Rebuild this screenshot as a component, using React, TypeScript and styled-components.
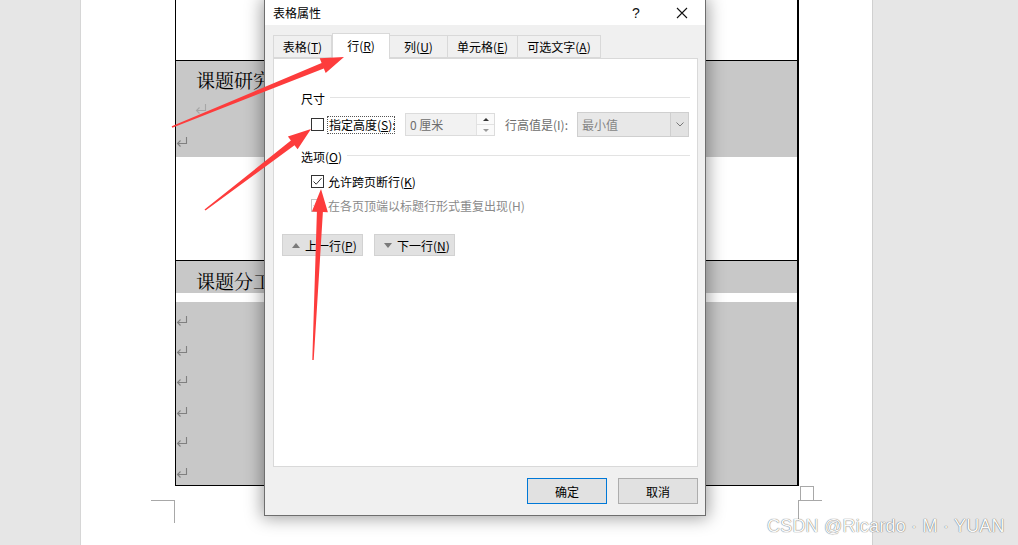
import React from "react";
import styled, { createGlobalStyle } from "styled-components";

const GlobalStyle = createGlobalStyle`
  html, body { margin: 0; padding: 0; }
  body {
    background: #e6e6e6;
    overflow: hidden;
    font-family: "Noto Sans CJK SC", "Noto Sans", sans-serif;
  }
`;

const UI_FONT = `"Noto Sans CJK SC", "Noto Sans", sans-serif`;
const DOC_FONT = `"Noto Serif CJK SC", "Noto Sans CJK SC", serif`;

const Screen = styled.div`
  position: relative;
  width: 1018px;
  height: 545px;
  overflow: hidden;
  display: flex;
  background: #e6e6e6;
`;

const Gutter = styled.div<{ $w: number }>`
  width: ${(p) => p.$w}px;
  flex: none;
`;

const Page = styled.div`
  width: 793px;
  flex: none;
  box-sizing: border-box;
  background: #fff;
  border-left: 1px solid #d6d6d6;
  border-right: 1px solid #d0d0d0;
  padding-left: 94px;
`;

const Table = styled.div`
  width: 624px;
  box-sizing: border-box;
  border-left: 1px solid #000;
  border-right: 2px solid #000;
  border-bottom: 1px solid #000;
`;

const Row = styled.div<{ $h: number; $gray?: boolean; $line?: boolean }>`
  height: ${(p) => p.$h}px;
  box-sizing: border-box;
  background: ${(p) => (p.$gray ? "#c8c8c8" : "#ffffff")};
  border-bottom: ${(p) => (p.$line ? "1px solid #000" : "none")};
  display: flex;
  flex-direction: column;
`;

const CellTitle = styled.div<{ $top: number }>`
  font-family: ${DOC_FONT};
  font-size: 19px;
  font-weight: 400;
  line-height: 26px;
  color: #000;
  padding-left: 20px;
  margin-top: ${(p) => p.$top}px;
  white-space: nowrap;
`;

const Marks = styled.div<{ $top: number }>`
  display: flex;
  flex-direction: column;
  padding-top: ${(p) => p.$top}px;
`;

const ReturnMark = styled.div<{ $indent?: number; $h?: number }>`
  height: ${(p) => p.$h ?? 30.4}px;
  flex: none;
  display: flex;
  align-items: center;
  padding-left: ${(p) => p.$indent ?? 0}px;
  & > svg {
    flex: none;
    display: block;
  }
`;

const CropRow = styled.div`
  width: 671px;
  margin-left: -24px;
  margin-top: 14px;
  display: flex;
  justify-content: space-between;
`;

const CropLeft = styled.div`
  width: 24px;
  height: 23px;
  box-sizing: border-box;
  border-top: 1px solid #a8a8a8;
  border-right: 1px solid #a8a8a8;
`;

const CropRight = styled.div`
  position: relative;
  width: 24px;
  height: 21px;
  box-sizing: border-box;
  border-top: 1px solid #a8a8a8;
  border-left: 1px solid #a8a8a8;
  &::before {
    content: "";
    position: absolute;
    left: 1px;
    top: -15px;
    width: 14px;
    height: 14px;
    box-sizing: border-box;
    border: 1px solid #a8a8a8;
    border-bottom: none;
  }
`;

/* ---------------- dialog ---------------- */

const Dialog = styled.div`
  position: absolute;
  left: 264px;
  top: 0;
  width: 442px;
  height: 516px;
  box-sizing: border-box;
  border: 1px solid #6e6e6e;
  border-top: none;
  background: #f0f0f0;
  box-shadow: 0 0 16px 2px rgba(0, 0, 0, 0.38);
  display: flex;
  flex-direction: column;
  font-family: ${UI_FONT};
  font-size: 12px;
  color: #000;
`;

const TitleBar = styled.div`
  height: 25px;
  flex: none;
  background: #ffffff;
  display: flex;
  align-items: center;
  padding-left: 8px;
`;

const TitleText = styled.div`
  flex: 1;
  font-size: 12px;
  line-height: 16px;
`;

const TitleButton = styled.div<{ $w: number }>`
  width: ${(p) => p.$w}px;
  height: 25px;
  display: flex;
  align-items: center;
  justify-content: center;
  font-family: "Liberation Sans", sans-serif;
  font-size: 14px;
  color: #111;
`;

const Body = styled.div`
  flex: 1;
  display: flex;
  flex-direction: column;
  padding: 8px 7px 11px 8px;
`;

const TabBar = styled.div`
  display: flex;
  align-items: flex-end;
  height: 25px;
  position: relative;
  z-index: 1;
`;

const Tab = styled.div<{ $w: number; $active?: boolean }>`
  width: ${(p) => p.$w}px;
  height: ${(p) => (p.$active ? 26 : 23)}px;
  box-sizing: border-box;
  margin-bottom: ${(p) => (p.$active ? -1 : 0)}px;
  background: ${(p) => (p.$active ? "#ffffff" : "#f0f0f0")};
  border: 1px solid #d9d9d9;
  border-bottom: ${(p) => (p.$active ? "none" : "1px solid #d9d9d9")};
  border-left: ${(p) => (p.$active ? "1px solid #d9d9d9" : "none")};
  &:first-child {
    border-left: 1px solid #d9d9d9;
  }
  display: flex;
  align-items: center;
  justify-content: center;
  padding-bottom: ${(p) => (p.$active ? 2 : 0)}px;
  font-size: 12px;
  white-space: nowrap;
`;

const Panel = styled.div`
  height: 409px;
  box-sizing: border-box;
  background: #fff;
  border: 1px solid #d9d9d9;
  display: flex;
  flex-direction: column;
  padding-top: 31px;
`;

const SectionHead = styled.div<{ $top: number }>`
  display: flex;
  align-items: center;
  height: 16px;
  margin-top: ${(p) => p.$top}px;
  padding: 0 7px 0 27px;
  font-size: 12px;
  white-space: nowrap;
  &::after {
    content: "";
    flex: 1;
    height: 1px;
    background: #e3e3e3;
    margin-left: 5px;
    margin-top: -2px;
  }
`;

const FieldRow = styled.div<{ $top: number; $h: number }>`
  display: flex;
  align-items: center;
  height: ${(p) => p.$h}px;
  margin-top: ${(p) => p.$top}px;
  padding-left: 37px;
  white-space: nowrap;
`;

const Box = styled.div<{ $disabled?: boolean }>`
  width: 13px;
  height: 13px;
  flex: none;
  box-sizing: border-box;
  border: 1px solid ${(p) => (p.$disabled ? "#c4c4c4" : "#333333")};
  background: #fff;
  display: flex;
  align-items: center;
  justify-content: center;
`;

const FocusLabel = styled.div`
  width: 68px;
  height: 18px;
  box-sizing: border-box;
  margin-left: 3px;
  border: 1px dotted #555;
  display: flex;
  align-items: center;
  padding-left: 1px;
  font-size: 12px;
`;

const CheckLabel = styled.div<{ $disabled?: boolean }>`
  margin-left: 4px;
  font-size: 12px;
  color: ${(p) => (p.$disabled ? "#8a8a8a" : "#000")};
`;

const NumInput = styled.div`
  width: 90px;
  height: 23px;
  box-sizing: border-box;
  margin-left: 10px;
  border: 1px solid #dcdcdc;
  background: #f2f2f2;
  display: flex;
`;

const InputText = styled.div`
  flex: 1;
  display: flex;
  align-items: center;
  padding-left: 4px;
  color: #6d6d6d;
  font-size: 12px;
`;

const Spinner = styled.div`
  width: 17px;
  display: flex;
  flex-direction: column;
  border-left: 1px solid #e2e2e2;
`;

const SpinHalf = styled.div<{ $top?: boolean }>`
  flex: 1;
  display: flex;
  align-items: center;
  justify-content: center;
  background: #fafafa;
  border-bottom: ${(p) => (p.$top ? "1px solid #e2e2e2" : "none")};
`;

const MutedLabel = styled.div`
  width: 72px;
  margin-left: 10px;
  color: #6d6d6d;
  font-size: 12px;
`;

const SelectBox = styled.div`
  width: 112px;
  height: 25px;
  box-sizing: border-box;
  border: 1px solid #cfcfcf;
  background: #e8e8e8;
  display: flex;
`;

const SelectText = styled.div`
  flex: 1;
  display: flex;
  align-items: center;
  padding-left: 4px;
  color: #858585;
  font-size: 12px;
`;

const SelectArrow = styled.div`
  width: 17px;
  border-left: 1px solid #cfcfcf;
  background: #e2e2e2;
  display: flex;
  align-items: center;
  justify-content: center;
`;

const NavRow = styled.div`
  display: flex;
  gap: 11px;
  margin-top: 20px;
  padding-left: 8px;
`;

const NavButton = styled.div`
  width: 81px;
  height: 22px;
  box-sizing: border-box;
  background: #e1e1e1;
  border: 1px solid #d2d2d2;
  display: flex;
  align-items: center;
  padding-left: 9px;
  gap: 5px;
  font-size: 12px;
  white-space: nowrap;
`;

const FooterRow = styled.div`
  display: flex;
  justify-content: flex-end;
  gap: 11px;
  margin-top: 11px;
`;

const DlgButton = styled.div<{ $primary?: boolean }>`
  width: 80px;
  height: 26px;
  box-sizing: border-box;
  background: #e1e1e1;
  border: 1px solid ${(p) => (p.$primary ? "#0078d7" : "#adadad")};
  display: flex;
  align-items: center;
  justify-content: center;
  font-size: 12px;
`;

/* ---------------- overlays ---------------- */

const Overlay = styled.svg`
  position: absolute;
  left: 0;
  top: 0;
  pointer-events: none;
  z-index: 5;
`;

const Watermark = styled.div`
  position: absolute;
  left: 767px;
  top: 515px;
  font-family: "Liberation Sans", Arial, sans-serif;
  font-size: 18px;
  line-height: 22px;
  letter-spacing: 0.2px;
  color: #fafafa;
  text-shadow: 0 0 1px rgba(0, 0, 0, 0.55), 0 0 1px rgba(0, 0, 0, 0.35);
  white-space: nowrap;
  z-index: 6;
`;

function arrowPoints(
  x1: number,
  y1: number,
  x2: number,
  y2: number,
  tailW = 1.5,
  neckW = 6,
  headW = 16,
  headL = 23
) {
  const dx = x2 - x1;
  const dy = y2 - y1;
  const len = Math.hypot(dx, dy);
  const ux = dx / len;
  const uy = dy / len;
  const nx = -uy;
  const ny = ux;
  const bx = x2 - ux * headL;
  const by = y2 - uy * headL;
  const pts: [number, number][] = [
    [x1 + (nx * tailW) / 2, y1 + (ny * tailW) / 2],
    [bx + (nx * neckW) / 2, by + (ny * neckW) / 2],
    [bx + (nx * headW) / 2, by + (ny * headW) / 2],
    [x2, y2],
    [bx - (nx * headW) / 2, by - (ny * headW) / 2],
    [bx - (nx * neckW) / 2, by - (ny * neckW) / 2],
    [x1 - (nx * tailW) / 2, y1 - (ny * tailW) / 2],
  ];
  return pts.map((p) => `${p[0].toFixed(1)},${p[1].toFixed(1)}`).join(" ");
}

const Check = ({ color }: { color: string }) => (
  <svg width="11" height="11" viewBox="0 0 11 11">
    <polyline points="1.5,5.5 4.2,8.2 9.5,2.2" fill="none" stroke={color} strokeWidth="1" />
  </svg>
);

const Tri = ({ up, color, w = 8, h = 5 }: { up?: boolean; color: string; w?: number; h?: number }) => (
  <svg width={w} height={h} viewBox={`0 0 ${w} ${h}`}>
    <polygon points={up ? `0,${h} ${w / 2},0 ${w},${h}` : `0,0 ${w},0 ${w / 2},${h}`} fill={color} />
  </svg>
);

const Pilcrow = ({ color = "#808080" }: { color?: string }) => (
  <svg width="12" height="11" viewBox="0 0 12 11">
    <path d="M10.5 1 V7.5 H1.5" fill="none" stroke={color} strokeWidth="1.1" />
    <path d="M4.5 4.5 L1.5 7.5 L4.5 10.5" fill="none" stroke={color} strokeWidth="1.1" />
  </svg>
);

export default function App() {
  const rowMarks = [0, 1, 2, 3, 4, 5];
  return (
    <>
      <GlobalStyle />
      <Screen>
        <Gutter $w={80} />
        <Page>
          <Table>
            <Row $h={61} $line />
            <Row $h={96} $gray>
              <CellTitle $top={6}>课题研究内容</CellTitle>
              <Marks $top={0}>
                <ReturnMark $indent={19} $h={30}>
                  <Pilcrow color="#a6a6a6" />
                </ReturnMark>
                <ReturnMark $h={36}>
                  <Pilcrow />
                </ReturnMark>
              </Marks>
            </Row>
            <Row $h={104} $line />
            <Row $h={32} $gray>
              <CellTitle $top={7}>课题分工</CellTitle>
            </Row>
            <Row $h={9} />
            <Row $h={183} $gray>
              <Marks $top={3}>
                {rowMarks.map((i) => (
                  <ReturnMark key={i}>
                    <Pilcrow />
                  </ReturnMark>
                ))}
              </Marks>
            </Row>
          </Table>
          <CropRow>
            <CropLeft />
            <CropRight />
          </CropRow>
        </Page>

        <Dialog>
          <TitleBar>
            <TitleText>表格属性</TitleText>
            <TitleButton $w={46}>?</TitleButton>
            <TitleButton $w={46}>
              <svg width="12" height="12" viewBox="0 0 12 12">
                <path d="M1 1 L11 11 M11 1 L1 11" stroke="#111" strokeWidth="1.1" />
              </svg>
            </TitleButton>
          </TitleBar>
          <Body>
            <TabBar>
              <Tab $w={59}>
                <span>表格(<u>T</u>)</span>
              </Tab>
              <Tab $w={58} $active>
                <span>行(<u>R</u>)</span>
              </Tab>
              <Tab $w={58}>
                <span>列(<u>U</u>)</span>
              </Tab>
              <Tab $w={70}>
                <span>单元格(<u>E</u>)</span>
              </Tab>
              <Tab $w={83}>
                <span>可选文字(<u>A</u>)</span>
              </Tab>
            </TabBar>
            <Panel>
              <SectionHead $top={0}>尺寸</SectionHead>
              <FieldRow $top={6} $h={25}>
                <Box />
                <FocusLabel>
                  <span>指定高度(<u>S</u>):</span>
                </FocusLabel>
                <NumInput>
                  <InputText>0 厘米</InputText>
                  <Spinner>
                    <SpinHalf $top>
                      <Tri up color="#333" w={6} h={3} />
                    </SpinHalf>
                    <SpinHalf>
                      <Tri color="#999" w={6} h={3} />
                    </SpinHalf>
                  </Spinner>
                </NumInput>
                <MutedLabel>行高值是(I):</MutedLabel>
                <SelectBox>
                  <SelectText>最小值</SelectText>
                  <SelectArrow>
                    <svg width="8" height="5" viewBox="0 0 8 5">
                      <polyline points="0.5,0.5 4,4 7.5,0.5" fill="none" stroke="#777" strokeWidth="1" />
                    </svg>
                  </SelectArrow>
                </SelectBox>
              </FieldRow>
              <SectionHead $top={11}>
                <span>选项(<u>O</u>)</span>
              </SectionHead>
              <FieldRow $top={8} $h={18}>
                <Box>
                  <Check color="#333" />
                </Box>
                <CheckLabel>
                  允许跨页断行(<u>K</u>)
                </CheckLabel>
              </FieldRow>
              <FieldRow $top={6} $h={18}>
                <Box $disabled>
                  <Check color="#bbb" />
                </Box>
                <CheckLabel $disabled>在各页顶端以标题行形式重复出现(H)</CheckLabel>
              </FieldRow>
              <NavRow>
                <NavButton>
                  <Tri up color="#7a7a7a" />
                  <span>上一行(<u>P</u>)</span>
                </NavButton>
                <NavButton>
                  <Tri color="#7a7a7a" />
                  <span>下一行(<u>N</u>)</span>
                </NavButton>
              </NavRow>
            </Panel>
            <FooterRow>
              <DlgButton $primary>确定</DlgButton>
              <DlgButton>取消</DlgButton>
            </FooterRow>
          </Body>
        </Dialog>

        <Overlay width="1018" height="545" viewBox="0 0 1018 545">
          <polygon points={arrowPoints(172, 127, 344, 57)} fill="#fd3c3c" />
          <polygon points={arrowPoints(205, 210, 311, 129)} fill="#fd3c3c" />
          <polygon points={arrowPoints(313, 360, 321, 189)} fill="#fd3c3c" />
        </Overlay>
        <Watermark>CSDN @Ricardo · M · YUAN</Watermark>
      </Screen>
    </>
  );
}
